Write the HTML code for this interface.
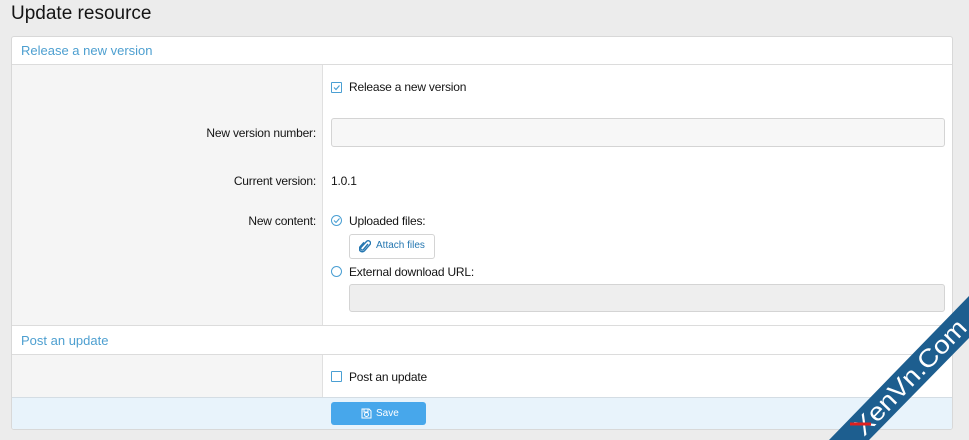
<!DOCTYPE html><html><head><style>
body{margin:0;width:969px;height:440px;background:#ececec;font-family:"Liberation Sans",sans-serif;position:relative;overflow:hidden;font-size:12px;color:#141414}
h1{position:absolute;left:11px;top:3px;margin:0;font-size:19px;font-weight:normal;color:#141414}
.panel{position:absolute;left:11px;top:36px;width:940px;height:392px;background:#fff;border:1px solid #d8d8d8;border-radius:3px;overflow:hidden}
.hd{position:absolute;left:0;width:940px;height:28px;border-bottom:1px solid #dcdcdc;font-size:13px;line-height:28px;padding-left:9px;box-sizing:border-box;color:#4d9fd0}
.left{position:absolute;left:0;width:310px;background:#f5f5f5;border-right:1px solid #e0e0e0}
.lbl{position:absolute;right:636px;text-align:right;white-space:nowrap;letter-spacing:-0.2px}
.t{position:absolute;white-space:nowrap;letter-spacing:-0.2px}
.inp{position:absolute;border:1px solid #d4d4d4;border-radius:3px;background:#f7f7f7}
.cb{position:absolute;width:9px;height:9px;border:1px solid #4a9fd3;border-radius:1px}
.rd{position:absolute;width:9px;height:9px;border:1px solid #4a9fd3;border-radius:50%}
</style></head><body>
<h1>Update resource</h1>
<div class="panel">
<div class="hd" style="top:0">Release a new version</div>
<div class="left" style="top:28px;height:260px"></div>
<div class="cb" style="left:319px;top:45px"><svg width="9" height="9" style="position:absolute;left:0;top:0"><path d="M2 4.5L4 6.5L7.5 2.5" stroke="#4a9fd3" fill="none" stroke-width="1.2"/></svg></div>
<div class="t" style="left:337px;top:43px">Release a new version</div>
<div class="lbl" style="top:89px">New version number:</div>
<div class="inp" style="left:319px;top:81px;width:612px;height:27px"></div>
<div class="lbl" style="top:137px">Current version:</div>
<div class="t" style="left:319px;top:137px">1.0.1</div>
<div class="lbl" style="top:177px">New content:</div>
<div class="rd" style="left:319px;top:178px"><svg width="9" height="9" style="position:absolute;left:0;top:0"><path d="M2 4.5L4 6.5L7.5 2.5" stroke="#4a9fd3" fill="none" stroke-width="1.1"/></svg></div>
<div class="t" style="left:337px;top:177px">Uploaded files:</div>
<div style="position:absolute;left:337px;top:197px;width:84px;height:23px;border:1px solid #d4d4d4;border-radius:3px;background:#fff"><svg width="12" height="14" style="position:absolute;left:9px;top:5px"><path d="M9 4L4.5 9.5a1.6 1.6 0 0 1-2.4-2.2L7.5 1.5a2.3 2.3 0 0 1 3.4 3.1L5.5 10.8a3 3 0 0 1-4.4-4.1L5 2.3" stroke="#2577b1" fill="none" stroke-width="1.4"/></svg><span style="position:absolute;left:26px;top:5px;color:#2577b1;font-size:10px">Attach files</span></div>
<div class="rd" style="left:319px;top:229px"></div>
<div class="t" style="left:337px;top:228px">External download URL:</div>
<div class="inp" style="left:337px;top:247px;width:594px;height:26px;background:#eeeeee"></div>
<div class="hd" style="top:288px;border-top:1px solid #dcdcdc;height:30px;line-height:29px">Post an update</div>
<div class="left" style="top:318px;height:42px"></div>
<div class="cb" style="left:319px;top:334px"></div>
<div class="t" style="left:337px;top:333px">Post an update</div>
<div style="position:absolute;left:0;top:360px;width:940px;height:33px;background:#e8f3fb;border-top:1px solid #d4dde4"></div>
<div style="position:absolute;left:319px;top:365px;width:95px;height:23px;background:#47a7eb;border-radius:3px;color:#fff;font-size:10px;line-height:23px"><svg width="11" height="11" style="position:absolute;left:30px;top:6px"><path d="M1 1H8L10 3V10H1Z M3 1V4H7V1 M3.5 6.5a2 2 0 1 0 4 0a2 2 0 1 0-4 0" stroke="#fff" fill="none"/></svg><span style="position:absolute;left:45px">Save</span></div>
</div>
<svg width="969" height="440" style="position:absolute;left:0;top:0">
<polygon points="829,440 969,296 969,338 869,440" fill="#1d5e8f"/>
<text x="0" y="0" transform="translate(864,437) rotate(-46)" fill="#fff" font-family="Liberation Sans" font-size="25" textLength="150" lengthAdjust="spacingAndGlyphs">XenVn.Com</text>
<line x1="850" y1="424" x2="871" y2="424" stroke="#e02020" stroke-width="3"/>
</svg>
</body></html>
